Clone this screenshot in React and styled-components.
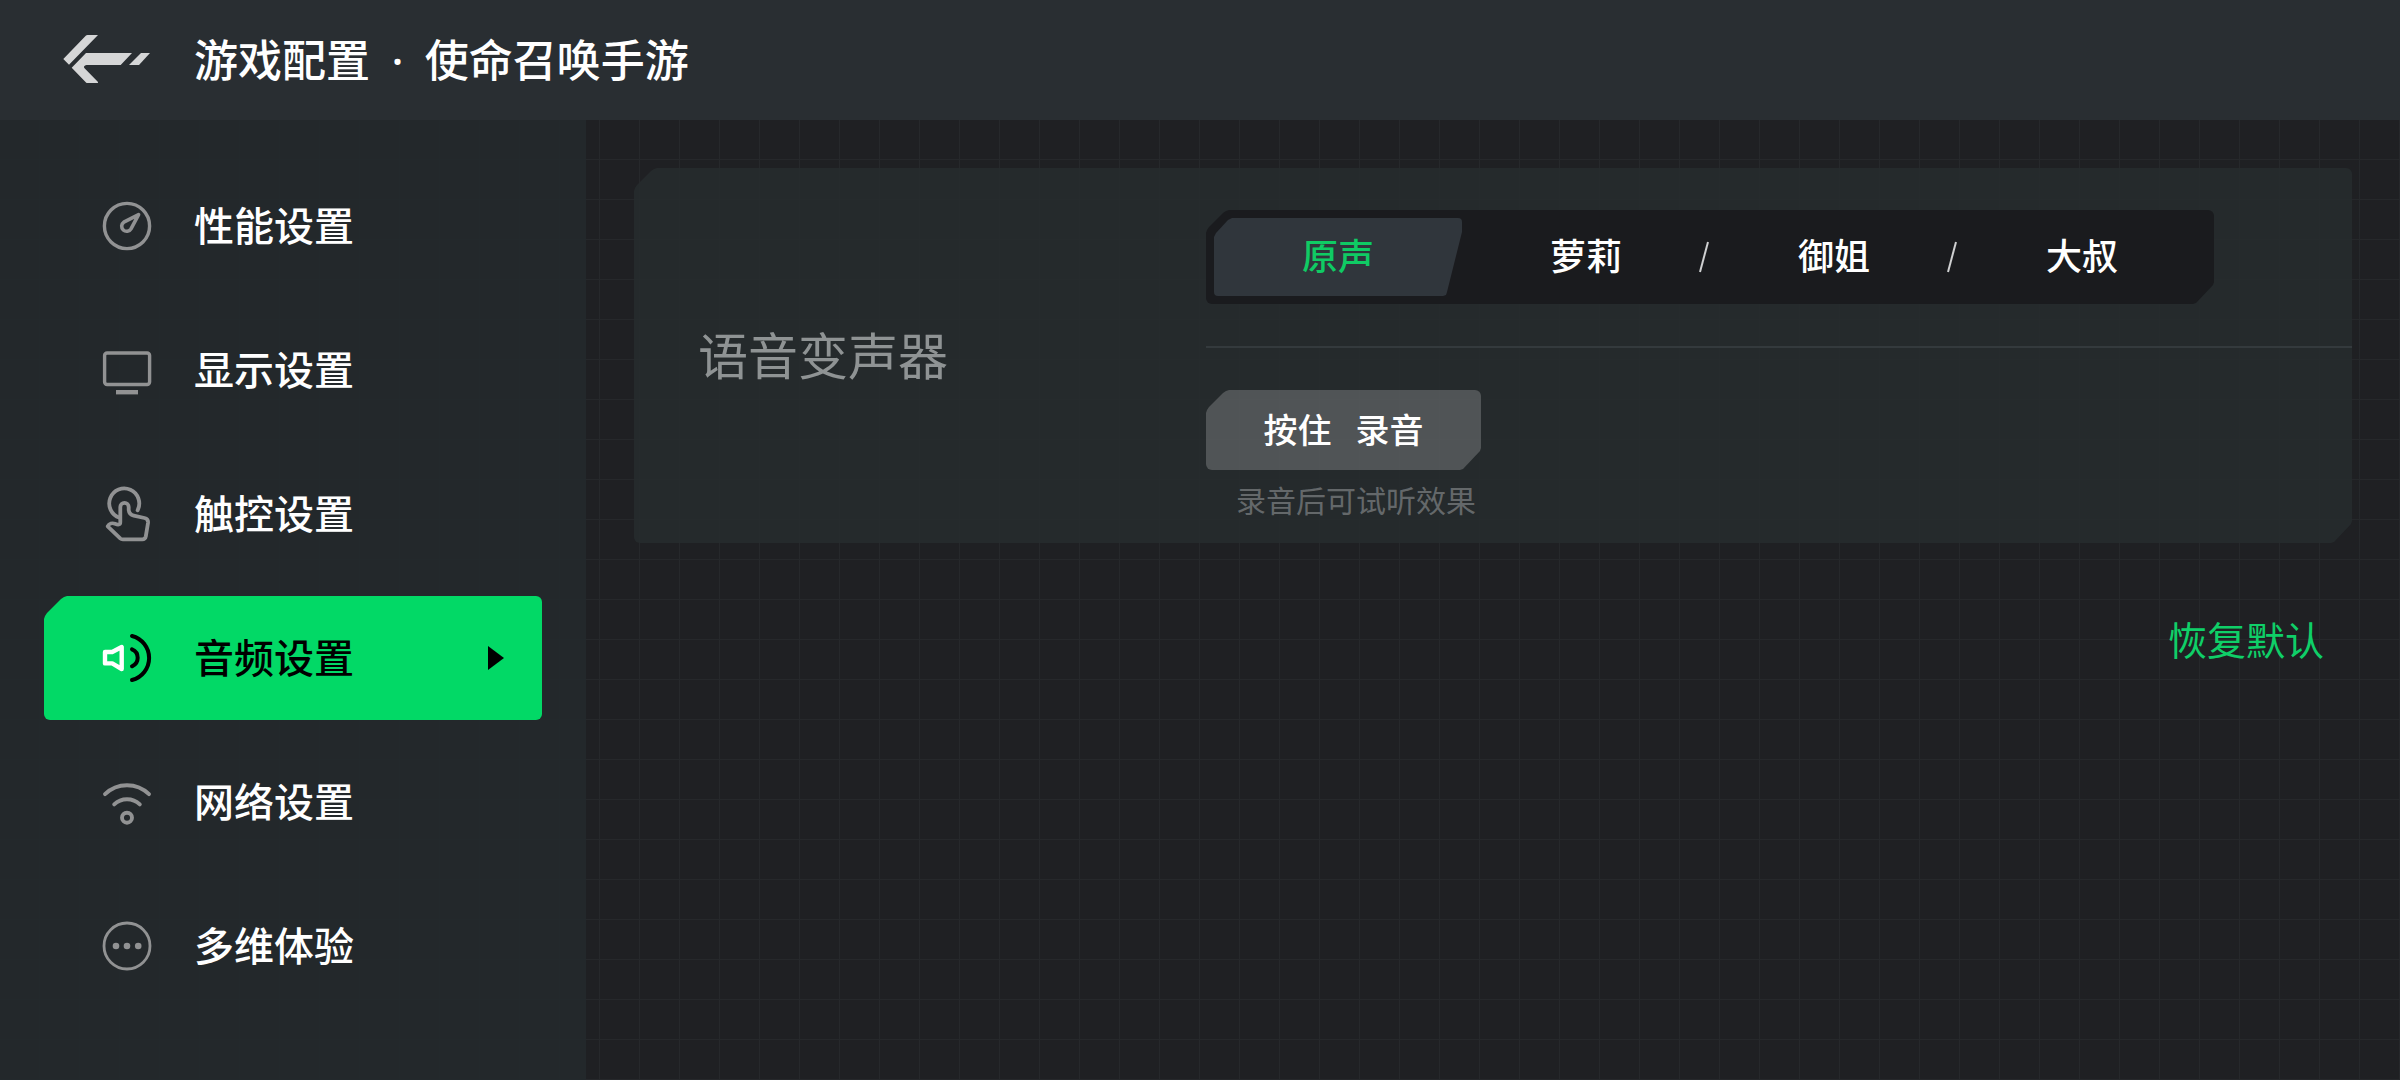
import React, { useState } from 'react'
import styled, { createGlobalStyle, css } from 'styled-components'

const GlobalStyle = createGlobalStyle`
  * {
    box-sizing: border-box;
  }
  body {
    margin: 0;
    color: #fff;
    background: #1f2023;
    font-family: 'Noto Sans', 'Noto Sans CJK SC', sans-serif;
  }
  button {
    padding: 0;
    border: 0;
    color: inherit;
    background: none;
    font: inherit;
    cursor: pointer;
  }
`

// chamfered corners, slightly rounded where the cut meets the edges
const topLeftCut = '0 23px, 1px 20px, 3px 17px, 17px 3px, 20px 1px, 23px 0'
const bottomRightCut = `100% calc(100% - 22px), calc(100% - 1px) calc(100% - 19px),
  calc(100% - 18px) calc(100% - 1px), calc(100% - 21px) 100%`

const cutTop = css`
  border-radius: 6px;
  clip-path: polygon(${topLeftCut}, 100% 0, 100% 100%, 0 100%);
`
const cutBoth = css`
  border-radius: 6px;
  clip-path: polygon(${topLeftCut}, 100% 0, ${bottomRightCut}, 0 100%);
`

const Page = styled.div`
  min-height: 100vh;
  display: flex;
  flex-direction: column;
  background-color: #1f2023;
  background-image: linear-gradient(
      to right,
      transparent 39px,
      #26282b 39px
    ),
    linear-gradient(to bottom, transparent 39px, #26282b 39px);
  background-size: 40px 40px;
`

const Header = styled.header`
  height: 120px;
  padding: 0 62px;
  display: flex;
  align-items: center;
  gap: 44px;
  background: #292e32;
`

const BackButton = styled.button`
  display: flex;
`

const Title = styled.h1`
  margin: 0;
  font-size: 44px;
  font-weight: 500;
  line-height: 64px;
`

const Dot = styled.span`
  margin: 0 10px;
`

const Body = styled.div`
  flex: 1;
  display: flex;
`

const Sidebar = styled.nav`
  flex: none;
  width: 586px;
  padding: 44px;
  display: flex;
  flex-direction: column;
  gap: 20px;
  background: rgba(36, 41, 44, 0.9);
`

const MenuItem = styled.button`
  height: 124px;
  padding: 0 38px 0 55px;
  display: flex;
  align-items: center;
  gap: 39px;
  font-size: 40px;
  font-weight: 500;
  line-height: 58px;
  ${({ $active }) =>
    $active &&
    css`
      color: #000;
      background: #02d966;
      ${cutTop}
    `}
`

const MenuIcon = styled.svg`
  width: 56px;
  height: 56px;
  fill: none;
  stroke: #919293;
  stroke-width: 3.4;
  stroke-linecap: round;
  stroke-linejoin: round;
`

const MenuArrow = styled.svg`
  margin-left: auto;
`

const Main = styled.main`
  flex: 1;
  padding: 48px;
  display: flex;
  flex-direction: column;
  align-items: flex-end;
  gap: 68px;
`

const Panel = styled.section`
  width: 100%;
  display: grid;
  grid-template-columns: 572px 1fr;
  align-items: center;
  background: rgba(38, 43, 45, 0.95);
  ${cutBoth}
`

const PanelTitle = styled.h2`
  margin: 0;
  padding-left: 64px;
  color: #8f9394;
  font-size: 50px;
  font-weight: 400;
  line-height: 72px;
`

const VoiceRow = styled.div`
  padding: 42px 138px 42px 0;
  border-bottom: 2px solid #343a3d;
`

const Options = styled.div`
  padding: 8px;
  display: grid;
  grid-template-columns: repeat(4, 1fr);
  background: #1a1b1e;
  ${cutBoth}
`

const Option = styled.label`
  position: relative;
  height: 78px;
  display: flex;
  align-items: center;
  justify-content: center;
  font-size: 36px;
  font-weight: 500;
  line-height: 54px;
  cursor: pointer;
  ${({ $active }) =>
    $active &&
    css`
      color: #0fcb64;
      background: #30363c;
      border-radius: 4px;
      clip-path: polygon(
        0 19px,
        2px 15px,
        14px 2px,
        18px 0,
        100% 0,
        100% 14px,
        calc(100% - 15px) calc(100% - 4px),
        calc(100% - 16px) calc(100% - 1px),
        calc(100% - 19px) 100%,
        0 100%
      );
    `}
`

const HiddenRadio = styled.input`
  position: absolute;
  inset: 0;
  margin: 0;
  opacity: 0;
  cursor: pointer;
`

const Slash = styled.svg`
  position: absolute;
  right: 1px;
`

const RecordRow = styled.div`
  padding: 42px 0 20px;
`

const RecordButton = styled.button`
  width: 275px;
  height: 80px;
  display: flex;
  align-items: center;
  justify-content: center;
  gap: 24px;
  background: rgba(255, 255, 255, 0.2);
  font-size: 34px;
  font-weight: 500;
  line-height: 48px;
  ${cutBoth}
`

const Hint = styled.p`
  margin: 9px 0 0;
  padding-left: 30px;
  color: #64686a;
  font-size: 30px;
  line-height: 44px;
`

const ResetButton = styled.button`
  margin-right: 28px;
  color: #0fcf68;
  font-size: 39px;
  line-height: 58px;
`

const menus = [
  {
    id: 'performance',
    text: '性能设置',
    icon: (
      <>
        <circle cx="28" cy="28" r="22.6" />
        <path d="M39.6 16.6 24.8 24.2A5 5 0 1 0 32 30.8Z" strokeWidth="3.6" />
      </>
    ),
  },
  {
    id: 'display',
    text: '显示设置',
    icon: (
      <>
        <rect x="5.6" y="11" width="45" height="31.5" rx="2.5" />
        <path d="M17 50.2H39" strokeWidth="4.4" strokeLinecap="butt" />
      </>
    ),
  },
  {
    id: 'touch',
    text: '触控设置',
    icon: (
      <g strokeWidth="3.8">
        <path d="M20.5 31.7A15 15 0 1 1 38.6 24.3" />
        <path d="M21.3 36V21a4.2 4.2 0 0 1 8.4 0V24q.5 4.6 5 5.6L45.5 32q4 1 3.5 5L46.8 50.4q-.6 2.9-3.4 2.9H23.8q-1.5 0-2.6-1L8.7 40.3C10 37.4 13.4 36.7 16 37.8 19 39 21.3 39 21.3 36Z" />
      </g>
    ),
  },
  {
    id: 'audio',
    text: '音频设置',
    icon: (
      <>
        <path d="M6 22H13.2L22.7 17V39L13.2 33.4H6Z" stroke="#fff" strokeWidth="4.4" />
        <g stroke="#000" strokeWidth="4">
          <path d="M33 19.3A9.2 9.2 0 0 1 33 36.3" />
          <path d="M33 6A22.7 22.7 0 0 1 33 50" />
        </g>
      </>
    ),
  },
  {
    id: 'network',
    text: '网络设置',
    icon: (
      <g strokeWidth="3.9">
        <path d="M6 20.2A31.4 31.4 0 0 1 50 20.2" />
        <path d="M15.2 30.4A18.4 18.4 0 0 1 40.8 30.4" />
        <circle cx="28" cy="43.7" r="5" />
      </g>
    ),
  },
  {
    id: 'more',
    text: '多维体验',
    icon: (
      <>
        <circle cx="28" cy="28" r="23" strokeWidth="2.8" />
        <g fill="#919293" stroke="none">
          <circle cx="17" cy="28" r="3.3" />
          <circle cx="28" cy="28" r="3.3" />
          <circle cx="39.2" cy="28" r="3.3" />
        </g>
      </>
    ),
  },
]

const voices = ['原声', '萝莉', '御姐', '大叔']

const BackIcon = () => (
  <svg width="88" height="50" viewBox="0 0 88 50" fill="#d5d6d7">
    <path d="M1.3 24 24 .6Q24.5 0 25.5 0H36L7 29.7Z" />
    <path d="M24 18H70L58.7 30H24.5Q21 31 22.3 33L36 47Q36.3 48 35.5 48H25.5Q24.5 48 24 47.5L9.7 32.7Z" />
    <path d="M79 18H88L77 30H67Z" />
  </svg>
)

const MenuList = ({ current, onSelect }) => (
  <Sidebar>
    {menus.map(({ id, text, icon }) => (
      <MenuItem key={id} $active={id === current} onClick={() => onSelect(id)}>
        <MenuIcon viewBox="0 0 56 56">{icon}</MenuIcon>
        {text}
        {id === current && (
          <MenuArrow width="16" height="24" viewBox="0 0 16 24">
            <path d="M0 0 16 12 0 24Z" />
          </MenuArrow>
        )}
      </MenuItem>
    ))}
  </Sidebar>
)

const VoiceOptions = ({ voice, onChange }) => (
  <Options role="radiogroup" aria-label="语音变声器">
    {voices.map((name, i) => (
      <Option key={name} $active={name === voice}>
        <HiddenRadio
          type="radio"
          name="voice"
          checked={name === voice}
          onChange={() => onChange(name)}
        />
        {name}
        {i < voices.length - 1 && name !== voice && (
          <Slash width="10" height="32" viewBox="0 0 10 32">
            <path d="M1 31 9 1" stroke="#d0d1d2" strokeWidth="2" />
          </Slash>
        )}
      </Option>
    ))}
  </Options>
)

const App = () => {
  const [menu, setMenu] = useState('audio')
  const [voice, setVoice] = useState(voices[0])

  return (
    <Page>
      <GlobalStyle />
      <Header>
        <BackButton aria-label="返回">
          <BackIcon />
        </BackButton>
        <Title>
          游戏配置<Dot> · </Dot>使命召唤手游
        </Title>
      </Header>
      <Body>
        <MenuList current={menu} onSelect={setMenu} />
        <Main>
          <Panel>
            <PanelTitle>语音变声器</PanelTitle>
            <div>
              <VoiceRow>
                <VoiceOptions voice={voice} onChange={setVoice} />
              </VoiceRow>
              <RecordRow>
                <RecordButton>
                  <span>按住</span>
                  <span>录音</span>
                </RecordButton>
                <Hint>录音后可试听效果</Hint>
              </RecordRow>
            </div>
          </Panel>
          <ResetButton onClick={() => setVoice(voices[0])}>恢复默认</ResetButton>
        </Main>
      </Body>
    </Page>
  )
}

export default App
